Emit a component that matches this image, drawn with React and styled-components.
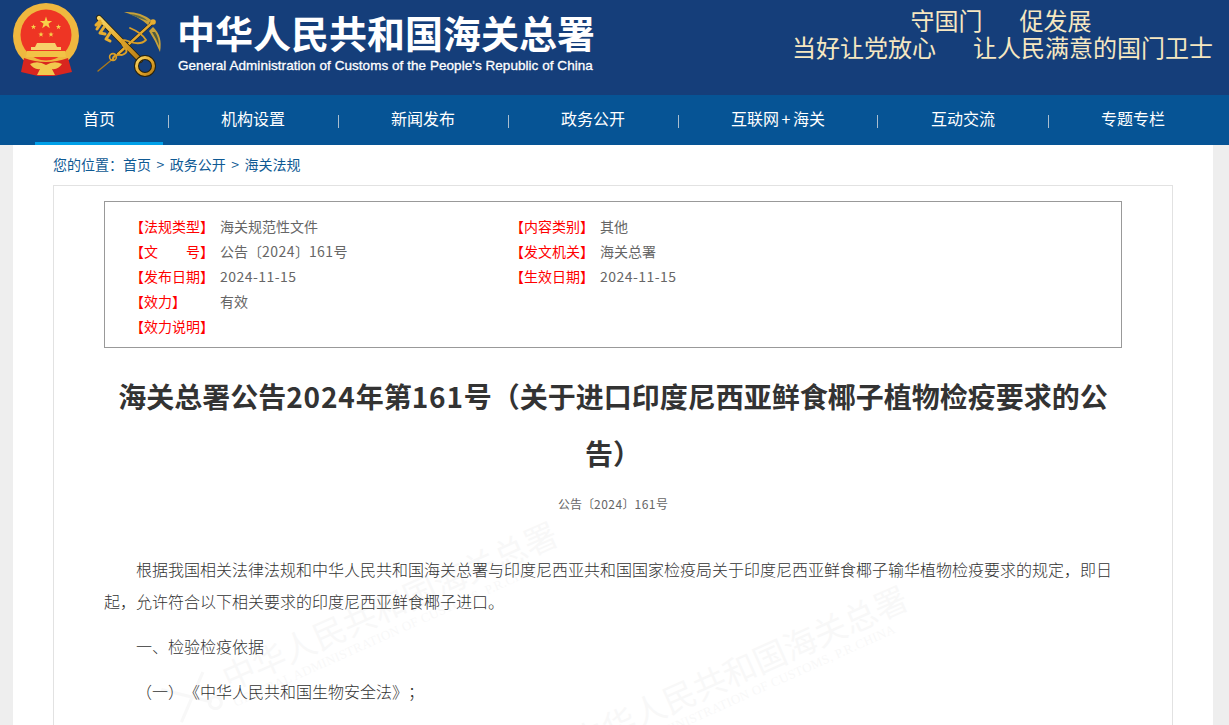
import React from 'react';
import styled, { createGlobalStyle } from 'styled-components';

const GlobalStyle = createGlobalStyle`
    html, body {
        margin: 0;
        padding: 0;
        height: 100%;
        overflow: hidden;
        background: #eeeeee;
    }
    body {
        font-family: "Noto Sans CJK SC", "Liberation Sans", sans-serif;
    }
`;

const Num = styled.span`
    letter-spacing: ${props => props.$space || 0.45}px;
`;

const docNumber = <>公告〔<Num>2024</Num>〕<Num>161</Num>号</>;

const metaLeft = [
    ['【法规类型】', '海关规范性文件'],
    ['【文　　号】', docNumber],
    ['【发布日期】', <Num key="d">2024-11-15</Num>],
    ['【效力】', '有效'],
    ['【效力说明】', ''],
];

const metaRight = [
    ['【内容类别】', '其他'],
    ['【发文机关】', '海关总署'],
    ['【生效日期】', <Num key="d">2024-11-15</Num>],
];

const navItems = ['首页', '机构设置', '新闻发布', '政务公开', '互联网+海关', '互动交流', '专题专栏'];

function Star({ x, y, r }) {
    const points = [];
    for (let i = 0; i < 10; i++) {
        const radius = i % 2 === 0 ? r : r * 0.4;
        const angle = (Math.PI / 5) * i - Math.PI / 2;
        points.push(`${x + radius * Math.cos(angle)},${y + radius * Math.sin(angle)}`);
    }
    return <polygon points={points.join(' ')} fill="#f7d24a" />;
}

function Emblems() {
    return (
        <svg width="165" height="95" viewBox="0 0 165 95">
            <defs>
                <linearGradient id="gold" x1="0" y1="0" x2="1" y2="1">
                    <stop offset="0" stopColor="#f8d768" />
                    <stop offset="0.55" stopColor="#e2a52a" />
                    <stop offset="1" stopColor="#b57c16" />
                </linearGradient>
            </defs>
            {/* national emblem */}
            <circle cx="46" cy="36" r="33" fill="#efb83f" />
            <circle cx="46" cy="35" r="25.5" fill="#ee3524" />
            <Star x={46} y={23} r={6.5} />
            <Star x={33.5} y={27} r={2.8} />
            <Star x={58.5} y={27} r={2.8} />
            <Star x={41} y={34.5} r={2.8} />
            <Star x={51} y={34.5} r={2.8} />
            <path d="M37 43 H55 L57 47 H61 V50 H31 V47 H35 Z" fill="#f7d26a" />
            <path d="M27 51 H65 L66 57 H26 Z" fill="#f2c246" />
            <path d="M24 58 Q46 66 68 58 L72 72 L54 76 H38 L21 72 Z" fill="#d9261f" />
            <path d="M30 64 Q38 60 46 65 Q54 60 62 64 Q58 70 52 69 L55 75 H37 L40 69 Q34 70 30 64 Z" fill="#f2c94e" />
            {/* customs key and caduceus */}
            <g fill="none" strokeLinecap="round" strokeLinejoin="round">
                <path d="M98 71 L120 53" stroke="#a9791d" strokeWidth="1.4" />
                <path d="M118 54 L153 22" stroke="#1f1a0a" strokeWidth="3.6" />
                <path d="M118 54 L153 22" stroke="url(#gold)" strokeWidth="2.4" />
                <path d="M99 18 L140 60" stroke="#2b2208" strokeWidth="6" />
                <path d="M99 18 L140 60" stroke="url(#gold)" strokeWidth="4.4" />
                <path d="M96 25 L100 21 M101 23 L97 29 M104 27 L100 33 L105 34 M110 33 L106 39 L110 41" stroke="#e6ad2f" strokeWidth="3" />
                <circle cx="145" cy="66" r="8.5" stroke="#2b2208" strokeWidth="5" />
                <circle cx="145" cy="66" r="8.5" stroke="url(#gold)" strokeWidth="3" />
                <path d="M130 28 Q142 33 146 40 Q140 46 128 41 Q118 38 124 47 Q130 52 122 55 Q112 54 113 60" stroke="#d99f28" strokeWidth="1.8" />
                <circle cx="113" cy="57" r="3.4" stroke="#d99f28" strokeWidth="1.6" />
            </g>
            <path d="M124 12 Q140 11 151 20 L148 25 Q138 16 124 12 Z" fill="#c9a23a" />
            <path d="M129 14 Q140 14 148 21 Q138 18 129 14 Z" fill="#5f6b46" />
            <path d="M153 27 Q163 36 160 52 Q155 40 149 31 Z" fill="#c9a23a" />
            <path d="M155 32 Q159 38 159 46 Q156 38 152 32 Z" fill="#4d5b40" />
            <circle cx="153" cy="22" r="2.8" fill="#e6ad2f" />
        </svg>
    );
}

function WatermarkKey() {
    return (
        <WatermarkIcon width="56" height="46" viewBox="0 0 56 46">
            <path d="M3 4 L44 36 M48 5 L8 42" stroke="#000" strokeWidth="3" fill="none" />
            <circle cx="47" cy="38" r="6" stroke="#000" strokeWidth="3" fill="none" />
        </WatermarkIcon>
    );
}

function NavLabel({ text }) {
    const parts = text.split('+');
    if (parts.length === 1) return text;
    return <>{parts[0]}<NavPlus>+</NavPlus>{parts[1]}</>;
}

function WatermarkBlock({ left, top }) {
    return (
        <Watermark $left={left} $top={top}>
            <WatermarkKey />
            <div>
                <WatermarkCn>中华人民共和国海关总署</WatermarkCn>
                <WatermarkEn>GENERAL ADMINISTRATION OF CUSTOMS, P.R.CHINA</WatermarkEn>
            </div>
        </Watermark>
    );
}

export default function App() {
    return (
        <Page>
            <GlobalStyle />
            <Header>
                <Emblems />
                <Brand>
                    <BrandTitle>中华人民共和国海关总署</BrandTitle>
                    <BrandSub>General Administration of Customs of the People's Republic of China</BrandSub>
                </Brand>
                <Slogan>
                    <SloganLine>守国门<SloganGap />促发展</SloganLine>
                    <SloganLine>当好让党放心<SloganGap />让人民满意的国门卫士</SloganLine>
                </Slogan>
            </Header>
            <Nav>
                {navItems.map((item, i) => (
                    <React.Fragment key={item}>
                        {i > 0 && <NavDivider />}
                        <NavItem $active={i === 0}><NavLabel text={item} /></NavItem>
                    </React.Fragment>
                ))}
            </Nav>
            <Main>
                <Crumbs>
                    您的位置：<span>首页</span><CrumbSep>&gt;</CrumbSep><span>政务公开</span><CrumbSep>&gt;</CrumbSep><span>海关法规</span>
                </Crumbs>
                <Card>
                    <MetaBox>
                        <MetaColumn>
                            {metaLeft.map(([label, value]) => (
                                <MetaRow key={label}>
                                    <MetaLabel>{label}</MetaLabel>
                                    <MetaValue>{value}</MetaValue>
                                </MetaRow>
                            ))}
                        </MetaColumn>
                        <MetaColumn>
                            {metaRight.map(([label, value]) => (
                                <MetaRow key={label}>
                                    <MetaLabel>{label}</MetaLabel>
                                    <MetaValue>{value}</MetaValue>
                                </MetaRow>
                            ))}
                        </MetaColumn>
                    </MetaBox>
                    <Title>海关总署公告<Num $space={0.85}>2024</Num>年第<Num $space={0.85}>161</Num>号（关于进口印度尼西亚鲜食椰子植物检疫要求的公告）</Title>
                    <DocNumber>{docNumber}</DocNumber>
                    <Article>
                        <Para>根据我国相关法律法规和中华人民共和国海关总署与印度尼西亚共和国国家检疫局关于印度尼西亚鲜食椰子输华植物检疫要求的规定，即日起，允许符合以下相关要求的印度尼西亚鲜食椰子进口。</Para>
                        <Para>一、检验检疫依据</Para>
                        <Para>（一）《中华人民共和国生物安全法》；</Para>
                    </Article>
                </Card>
            </Main>
            <WatermarkBlock left={157} top={687} />
            <WatermarkBlock left={507} top={751} />
        </Page>
    );
}

const Page = styled.div`
    position: relative;
    height: 725px;
    overflow: hidden;
    background: #eeeeee;
`;

const Header = styled.header`
    display: flex;
    height: 95px;
    background: #153e7a;
`;

const Brand = styled.div`
    display: flex;
    flex-direction: column;
    margin-left: 12px;
    padding-top: 9px;
    width: 610px;
`;

const BrandTitle = styled.div`
    font-size: 38px;
    line-height: 46px;
    font-weight: 700;
    color: #ffffff;
    white-space: nowrap;
`;

const BrandSub = styled.div`
    margin: 3px 0 0 1px;
    font-family: "Liberation Sans", sans-serif;
    font-size: 13.5px;
    line-height: 16px;
    letter-spacing: 0.05px;
    color: #ffffff;
    -webkit-text-stroke: 0.3px #ffffff;
    white-space: nowrap;
`;

const Slogan = styled.div`
    width: 418px;
    margin-left: 5px;
    padding-top: 6px;
    text-align: center;
    color: #f6e7c1;
    font-size: 24px;
    line-height: 27px;
`;

const SloganLine = styled.div`
    white-space: nowrap;
`;

const SloganGap = styled.span`
    display: inline-block;
    width: 37px;
`;

const Nav = styled.nav`
    display: flex;
    align-items: stretch;
    height: 50px;
    padding-left: 35px;
    background: #065495;
`;

const NavItem = styled.div`
    display: flex;
    align-items: center;
    padding: 0 48px 4px;
    font-size: 16px;
    color: #ffffff;
    white-space: nowrap;
    box-shadow: ${props => (props.$active ? 'inset 0 -3px 0 #00a0e9' : 'none')};
`;

const NavPlus = styled.span`
    margin: 0 1.5px;
    padding: 0 1px;
`;

const NavDivider = styled.span`
    width: 1px;
    height: 13px;
    margin: 20px 4.5px 0;
    background: #a9bdcf;
`;

const Main = styled.main`
    width: 1200px;
    height: 580px;
    margin-left: 13px;
    padding: 0 40px;
    box-sizing: border-box;
    background: #ffffff;
`;

const Crumbs = styled.div`
    height: 40px;
    font-size: 14px;
    line-height: 38px;
    color: #0f5a94;
    white-space: nowrap;
    text-spacing-trim: space-all;
`;

const CrumbSep = styled.span`
    margin: 0 5.5px;
`;

const Card = styled.section`
    height: 600px;
    width: 1120px;
    padding: 15px 50px 0;
    box-sizing: border-box;
    border: 1px solid #e2e2e2;
`;

const MetaBox = styled.div`
    display: flex;
    height: 147px;
    box-sizing: border-box;
    padding: 12px 25px 0;
    border: 1px solid #999999;
`;

const MetaColumn = styled.div`
    width: 380px;
`;

const MetaRow = styled.div`
    display: flex;
    height: 25px;
    line-height: 25px;
    font-size: 14px;
`;

const MetaLabel = styled.span`
    width: 90px;
    color: #ff0000;
    white-space: nowrap;
`;

const MetaValue = styled.span`
    color: #666666;
    white-space: nowrap;
`;

const Title = styled.h1`
    margin: 20px 0 0;
    font-size: 28px;
    line-height: 57px;
    font-weight: 700;
    color: #333333;
    text-align: center;
`;

const DocNumber = styled.div`
    margin-top: 13px;
    font-size: 12px;
    line-height: 18px;
    color: #666666;
    text-align: center;
`;

const Article = styled.article`
    margin-top: 40px;
`;

const Para = styled.p`
    margin: 0 0 13px;
    font-size: 16px;
    line-height: 32px;
    font-weight: 300;
    color: #333333;
    text-indent: 2em;
    text-spacing-trim: space-all;
`;

const Watermark = styled.div`
    position: absolute;
    left: ${props => props.$left}px;
    top: ${props => props.$top}px;
    display: flex;
    align-items: flex-start;
    gap: 8px;
    transform: rotate(-24deg);
    transform-origin: left top;
    color: #000000;
    opacity: 0.022;
    pointer-events: none;
    white-space: nowrap;
`;

const WatermarkIcon = styled.svg`
    flex: none;
`;

const WatermarkCn = styled.div`
    font-size: 33px;
    line-height: 38px;
    font-weight: 400;
`;

const WatermarkEn = styled.div`
    font-family: "Liberation Serif", serif;
    font-size: 13px;
    line-height: 16px;
    letter-spacing: 0.3px;
`;
